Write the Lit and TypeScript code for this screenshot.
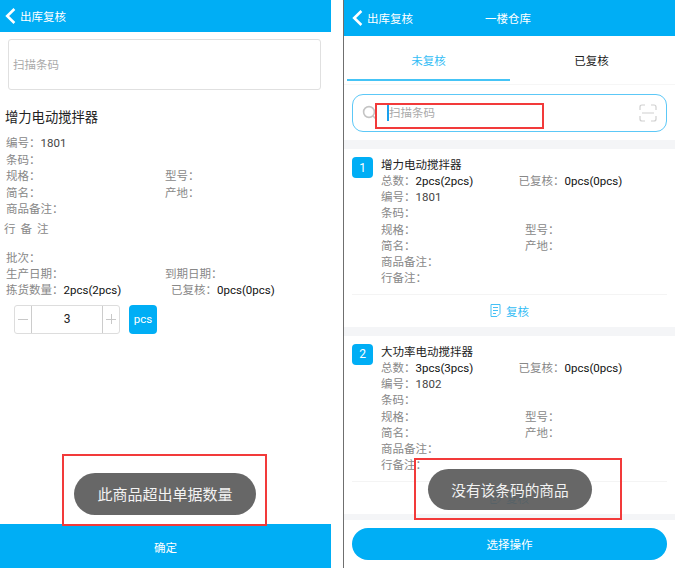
import { LitElement, html, css } from "lit";
import { customElement } from "lit/decorators.js";

const back = html`<svg class="back" viewBox="0 0 11 16" width="11" height="16"><path d="M9.4 1 L2.2 8 L9.4 15" fill="none" stroke="#fff" stroke-width="2.6"/></svg>`;

@customElement("app-root")
export class AppRoot extends LitElement {
  static styles = css`
    :host { display: flex; width: 675px; height: 568px; overflow: hidden; background: #fff; color: #888;
      font-family: Roboto, "Noto Sans CJK SC", sans-serif; font-size: 11.5px; position: relative; }
    .left { width: 331px; height: 568px; display: flex; flex-direction: column; position: relative; flex: none; }
    .gap { width: 12px; flex: none; }
    .right { width: 331px; height: 568px; border-left: 1px solid #6f6f6f; display: flex; flex-direction: column; position: relative; overflow: hidden; flex: none; }
    .bar { background: #00aef5; color: #fff; display: flex; align-items: center; flex: none; }
    .left .bar { height: 32px; padding-left: 5px; gap: 4px; }
    .right .bar { height: 36px; padding-left: 8px; gap: 4px; position: relative; }
    .bar .mid { position: absolute; left: 141px; }
    .back { flex: none; }
    .scan { margin: 7px 10px 0 8px; height: 48px; border: 1px solid #e0e0e0; border-radius: 3px; display: flex; align-items: center; padding: 0 0 1px 4px; color: #aaa; flex: none; }
    .title { color: #222; font-size: 13.3px; margin: 18px 0 0 5px; line-height: 20px; }
    .info { margin: 7px 0 0 6px; line-height: 16.5px; }
    .row { display: grid; grid-template-columns: 159px 1fr; height: 16.5px; }
    .shift { padding-left: 6px; }
    .v { color: #444; }
    .k { color: #111; }
    .note { margin: 2px 0 0 4px; letter-spacing: 5px; line-height: 18px; height: 18px; }
    .info.later { margin-top: 12px; line-height: 16px; }
    .later .row { height: 16px; }
    .stepper { display: flex; align-items: center; margin: 7px 0 0 14px; gap: 9px; }
    .box { display: flex; width: 104px; height: 27px; border: 1px solid #ddd; border-radius: 3px; }
    .box span { display: flex; align-items: center; justify-content: center; }
    .box .sb { width: 16px; flex: none; }
    .box .num { flex: 1; color: #222; font-size: 12px; border-left: 1px solid #ccc; border-right: 1px solid #ccc; }
    .pcs { width: 28px; height: 29px; border-radius: 4px; background: #00aef5; color: #fff; display: flex; align-items: center; justify-content: center; }
    .spacer { flex: 1; }
    .confirm { height: 43px; padding-top: 1px; background: #00aef5; color: #fff; display: flex; align-items: center; justify-content: center; flex: none; }
    .toast { position: absolute; background: rgba(90, 90, 90, 0.92); color: #f2f2f2; border-radius: 21px; display: flex; align-items: center; justify-content: center; padding-bottom: 1px; box-sizing: border-box; }
    .left .toast { left: 74px; top: 473px; width: 182px; height: 42px; font-size: 15px; }
    .right .toast { left: 84px; top: 469px; width: 164px; height: 41px; font-size: 14.7px; }
    .mark { position: absolute; border: 2px solid #f23a3a; box-sizing: border-box; }
    .mark.lm { left: 62px; top: 454px; width: 205px; height: 72px; }
    .mark.rm { left: 70px; top: 458px; width: 208px; height: 62px; }
    .mark.sm { left: 31px; top: 103px; width: 169px; height: 26px; }
    .tabs { display: grid; grid-template-columns: 163px 1fr; height: 45px; padding: 0 0 3px 3px; flex: none; border-bottom: 1px solid #f6f6f6; }
    .tab { display: flex; align-items: center; justify-content: center; color: #222; padding: 5px 2px 0 0; border-bottom: 2px solid transparent; }
    .tab.on { color: #35bdf5; border-bottom-color: #45c4f6; padding-right: 0; }
    .search { margin: 9px 8px 0 8px; height: 36px; border: 1px solid #5cc8f7; border-radius: 11px; display: flex; align-items: center; padding: 0 9px; flex: none; color: #aaa; }
    .search .ph { margin-left: 9px; border-left: 2px solid #1aa0ee; height: 16px; line-height: 16px; }
    .search .scanicon { margin-left: auto; }
    .sep { height: 9px; background: #f4f5f7; flex: none; }
    .sep.first { margin-top: 8px; }
    .card { padding: 0 8px; flex: none; }
    .head { display: flex; gap: 8px; padding-top: 8px; }
    .badge { width: 21px; height: 21px; border-radius: 4px; background: #00aef5; color: #fff; display: flex; align-items: center; justify-content: center; flex: none; font-size: 12px; }
    .c { line-height: 16.2px; flex: 1; }
    .name { color: #222; line-height: 16px; }
    .r2 { display: grid; grid-template-columns: 144px 1fr; height: 16.2px; }
    .r2.wide { grid-template-columns: 137.5px 1fr; }
    .action { border-top: 1px solid #f4f4f4; margin-top: 7.6px; height: 32px; display: flex; align-items: center; justify-content: center; gap: 5px; color: #35bdf5; }
    .bottom { position: absolute; left: 0; right: 0; top: 520px; height: 48px; background: #fff; padding: 8px 8px 0; box-sizing: border-box; }
    .btn { height: 32px; border-radius: 16px; background: #00aef5; color: #fff; display: flex; align-items: center; justify-content: center; }
  `;

  card(n: number, name: string, total: string, code: string) {
    return html`<div class="card">
      <div class="head">
        <div class="badge">${n}</div>
        <div class="c">
          <div class="name">${name}</div>
          <div class="r2 wide"><span>总数：<span class="k">${total}</span></span><span>已复核：<span class="k">0pcs(0pcs)</span></span></div>
          <div>编号：<span class="v">${code}</span></div>
          <div>条码：</div>
          <div class="r2"><span>规格：</span><span>型号：</span></div>
          <div class="r2"><span>简名：</span><span>产地：</span></div>
          <div>商品备注：</div>
          <div>行备注：</div>
        </div>
      </div>
      <div class="action">
        <svg width="11" height="13" viewBox="0 0 11 13" fill="none" stroke="#45c0f5" stroke-width="1"><path d="M7 12.5H1V.5H10V9.5L7 12.5ZM3 3.5H8M3 6.5H8M3 9.5H6"/></svg>
        <span>复核</span>
      </div>
    </div>`;
  }

  render() {
    return html`
      <div class="left">
        <div class="bar">${back}<span>出库复核</span></div>
        <div class="scan">扫描条码</div>
        <div class="title">增力电动搅拌器</div>
        <div class="info">
          <div>编号：<span class="v">1801</span></div>
          <div>条码：</div>
          <div class="row"><span>规格：</span><span>型号：</span></div>
          <div class="row"><span>简名：</span><span>产地：</span></div>
          <div>商品备注：</div>
        </div>
        <div class="note">行备注</div>
        <div class="info later">
          <div>批次：</div>
          <div class="row"><span>生产日期：</span><span>到期日期：</span></div>
          <div class="row"><span>拣货数量：<span class="k">2pcs(2pcs)</span></span><span class="shift">已复核：<span class="k">0pcs(0pcs)</span></span></div>
        </div>
        <div class="stepper">
          <div class="box">
            <span class="sb"><svg width="12" height="12" viewBox="0 0 12 12" stroke="#c8c8c8" stroke-width="1"><path d="M1 6.5H11"/></svg></span>
            <span class="num">3</span>
            <span class="sb"><svg width="12" height="12" viewBox="0 0 12 12" stroke="#c8c8c8" stroke-width="1"><path d="M1 6.5H11M6.5 1V11"/></svg></span>
          </div>
          <div class="pcs">pcs</div>
        </div>
        <div class="spacer"></div>
        <div class="confirm">确定</div>
        <div class="toast">此商品超出单据数量</div>
        <div class="mark lm"></div>
      </div>
      <div class="gap"></div>
      <div class="right">
        <div class="bar">${back}<span>出库复核</span><span class="mid">一楼仓库</span></div>
        <div class="tabs"><div class="tab on">未复核</div><div class="tab">已复核</div></div>
        <div class="search">
          <svg width="16" height="16" viewBox="0 0 16 16" fill="none" stroke="#c4c4c4" stroke-width="1.6"><circle cx="7" cy="7" r="5.4"/><path d="M11 11L14 14"/></svg>
          <span class="ph">扫描条码</span>
          <svg class="scanicon" width="18" height="18" viewBox="0 0 18 18" fill="none" stroke="#cfcfcf" stroke-width="1.2"><path d="M1 6V3Q1 1 3 1H6M12 1H15Q17 1 17 3V6M1 12V15Q1 17 3 17H6M12 17H15Q17 17 17 15V12M3 9H15"/></svg>
        </div>
        <div class="sep first"></div>
        ${this.card(1, "增力电动搅拌器", "2pcs(2pcs)", "1801")}
        <div class="sep"></div>
        ${this.card(2, "大功率电动搅拌器", "3pcs(3pcs)", "1802")}
        <div class="sep"></div>
        <div class="bottom"><div class="btn">选择操作</div></div>
        <div class="mark sm"></div>
        <div class="toast">没有该条码的商品</div>
        <div class="mark rm"></div>
      </div>
    `;
  }
}
